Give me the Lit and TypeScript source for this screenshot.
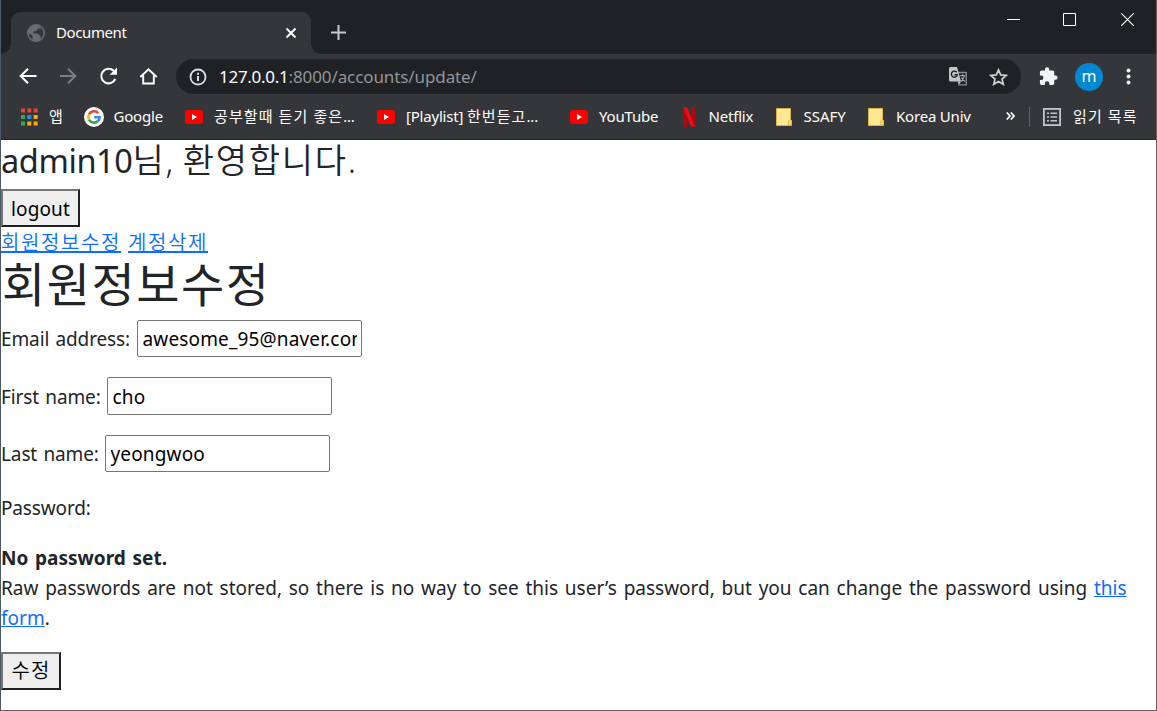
import { LitElement, html, css, svg } from "lit";
import { customElement } from "lit/decorators.js";

const youtube = svg`<svg width="18" height="14" viewBox="0 0 18 14"><rect width="18" height="14" rx="3" fill="#f00"/><path d="M7 4v6l5-3z" fill="#fff"/></svg>`;
const folder = svg`<svg width="16" height="18" viewBox="0 0 16 18"><path d="M.5.5h14v11l1 1v5H.5z" fill="#ffe794" stroke="#d9b44a"/><path d="M12.500 17v-4l1.500-1.500 1.500 1.500v4z" fill="#ffd75e" stroke="#d9b44a" stroke-width=".8"/></svg>`;
const netflix = svg`<svg width="12" height="20" viewBox="0 0 12 20"><path d="M0 0h4v19.500l-4 .5zM8 0h4v20l-4-.5z" fill="#b1060f"/><path d="M0 0h4l8 20-4-.5z" fill="#f00a16"/></svg>`;
const google = svg`<svg width="20" height="20" viewBox="0 0 20 20"><circle cx="10" cy="10" r="10" fill="#fff"/><g fill="none" stroke-width="2.600"><path d="M14.200 6.100A5.700 5.700 0 0 0 5 7.300" stroke="#ea4335"/><path d="M5 7.300a5.700 5.700 0 0 0 0 5.400" stroke="#fbbc05"/><path d="M5 12.700a5.700 5.700 0 0 0 8.800 1.500" stroke="#34a853"/><path d="M13.800 14.200A5.500 5.500 0 0 0 15.600 10.200H10.200" stroke="#4285f4"/></g></svg>`;
const appColors = ["#ea4335", "#ea4335", "#ea4335", "#34a853", "#2a8bf2", "#fbac05", "#34a853", "#fbac05", "#fbac05"];
const apps = svg`<svg width="17" height="18" viewBox="0 0 17 18">${appColors.map((c, i) => svg`<rect x=${(i % 3) * 6.3} y=${Math.floor(i / 3) * 6.5 + 0.5} width="4" height="4" fill=${c}/>`)}</svg>`;

const bookmarks = [
  { cls: "apps", icon: apps, label: "앱" },
  { cls: "google", icon: google, label: "Google" },
  { cls: "study", icon: youtube, label: html`<span class="ko">공부할때 듣기 좋은</span>...` },
  { cls: "playlist", icon: youtube, label: html`[Playlist] <span class="ko">한번듣고</span>...` },
  { cls: "youtube", icon: youtube, label: "YouTube" },
  { cls: "netflix", icon: netflix, label: "Netflix" },
  { cls: "ssafy", icon: folder, label: "SSAFY" },
  { cls: "korea", icon: folder, label: "Korea Univ" },
];

@customElement("app-root")
export class AppRoot extends LitElement {
  static styles = css`
    :host { display: block; width: 1157px; height: 711px; overflow: hidden; box-sizing: border-box; border: 1px solid #626262; border-left-color: #4b5a68; border-top: 0; background: #fff; color: #212529; font-family: "Noto Sans", "Noto Sans CJK KR", sans-serif; }
    * { box-sizing: border-box; }
    svg { display: block; flex: none; }
    .strip { height: 54px; background: #202124; display: flex; align-items: flex-end; color: #fff; }
    .tab { position: relative; margin-left: 10px; width: 300px; height: 42px; background: #35363a; border-radius: 9px 9px 0 0; display: flex; align-items: center; padding: 0 14px 0 16px; }
    .tab .t { font-size: 15px; margin-left: 11px; padding-bottom: 2px; flex: 1; letter-spacing: -0.4px; }
    .t { white-space: nowrap; }
    .foot { position: absolute; bottom: 0; width: 10px; height: 10px; }
    .foot.l { left: -10px; background: radial-gradient(circle at 0 0, #202124 9.5px, #35363a 10px); }
    .foot.r { right: -10px; background: radial-gradient(circle at 100% 0, #202124 9.5px, #35363a 10px); }
    .plus { margin: 0 0 14px 20px; }
    .win { margin-left: auto; display: flex; gap: 43px; margin-bottom: 28px; padding-right: 22px; }
    .win .x { margin-left: 2px; }
    .toolbar { height: 40px; background: #35363a; display: flex; align-items: flex-start; }
    .nav { display: flex; align-items: center; height: 44px; padding-left: 15px; gap: 16px; width: 175px; }
    .omni { margin-top: 5px; width: 845px; height: 35px; border-radius: 18px; background: #202124; display: flex; align-items: center; padding: 0 13px; }
    .url { flex: 1; font-size: 17px; color: #92959a; margin-left: 12px; letter-spacing: -0.1px; }
    .url b { font-weight: 400; color: #fff; letter-spacing: -0.28px; }
    .omni .tr { margin-right: 21px; }
    .right { display: flex; align-items: center; height: 45px; padding-left: 16px; }
    .avatar { width: 28px; height: 28px; border-radius: 50%; background: #0288d1; color: #fff; font: 16px/26px "Noto Sans", sans-serif; text-align: center; margin: 0 22px 0 15px; }
    .bookmarks { height: 46px; background: #35363a; border-bottom: 1px solid #242528; display: flex; align-items: center; color: #fff; font-size: 15px; }
    .bm { display: flex; align-items: center; flex: none; }
    .bm .t { margin-left: 11px; padding-bottom: 2px; letter-spacing: -0.2px; }
    .bm .t .ko { letter-spacing: 1.1px; }
    .bm.apps { margin-left: 20px; width: 63px; }
    .bm.google { width: 101px; } .bm.google .t { margin-left: 9.5px; }
    .bm.study { width: 192px; } .bm.playlist { width: 193px; } .bm.youtube { width: 113px; }
    .bm.netflix { width: 93px; } .bm.netflix .t { margin-left: 13.5px; }
    .bm.ssafy { width: 92px; } .bm.ssafy .t { margin-left: 11.5px; letter-spacing: 0; }
    .bm.korea .t { margin-left: 12px; }
    .bm.korea { width: 138px; }
    .more { margin-bottom: 2px; }
    .divider { width: 1px; height: 20px; background: #5f6164; margin: 0 13px 0 14px; }
    .reading { margin-left: 12px; padding-bottom: 2px; letter-spacing: 1.1px; }
    .page { font-size: 19px; line-height: 30px; }
    h3, h1 { margin: 0; font-weight: 400; white-space: nowrap; }
    h3 { font-size: 32.5px; line-height: 41px; height: 49px; letter-spacing: -0.4px; }
    .welcome { font-size: 34px; font-weight: 350; letter-spacing: 1.7px; word-spacing: -2.5px; }
    h1 { font-size: 47px; line-height: 54px; height: 63px; letter-spacing: 1.5px; padding-left: 1px; }
    button { display: block; border: 2px solid; border-color: #767676 #212121 #212121 #767676; background: #efefef; color: #000; font: inherit; padding: 0; height: 38px; border-radius: 0; }
    .logout { width: 79px; padding-top: 2px; letter-spacing: 0.1px; }
    .save { width: 60px; margin-top: 19px; font-size: 20px; font-weight: 350; letter-spacing: 1.2px; }
    a { color: #0d6efd; text-decoration: underline; }
    .links { height: 30px; white-space: nowrap; font-size: 20px; line-height: 31px; display: flex; gap: 7px; font-weight: 350; letter-spacing: 1.6px; }
    .field { display: flex; align-items: center; height: 37px; margin-bottom: 20px; }
    .field .t { flex: none; word-spacing: 1.5px; letter-spacing: -0.12px; }
    .field.email .t { width: 135.5px; } .field.first .t { width: 105.5px; } .field.last .t { width: 103.5px; }
    .field.first, .field.first input { height: 38px; }
    .field.first .t, .field.first input { padding-top: 2px; }
    .field.last { margin-bottom: 20.5px; }
    input { width: 225px; height: 37px; border: 1px solid #767676; border-radius: 2px; padding: 0 4px 0 5px; font: inherit; color: #000; background: #fff; outline: 0; letter-spacing: 0.15px; }
    .pw { height: 30px; margin-bottom: 20px; letter-spacing: -0.15px; }
    strong { font-weight: 700; }
    .raw { height: 90px; word-spacing: 1.81px; }
    .raw > div { height: 30px; white-space: nowrap; }
  `;

  render() {
    return html`
      <div class="strip">
        <div class="tab">
          <i class="foot l"></i><i class="foot r"></i>
          <svg width="18" height="18" viewBox="0 0 18 18"><circle cx="9" cy="9" r="8.200" fill="#35363a" stroke="#6a6c70" stroke-width="1.600"/><path d="M7 1.200C3 2 1 5.500 1 9l4.500 2.500L5.500 15l2 2.300c4 .5 6-1.300 6-3.300v-2l-3-2.500H6.500V7.500L9 7l2-2.500h2.500V3C11.500 1.300 9.500.8 7 1.200z" fill="#6a6c70"/></svg>
          <span class="t">Document</span>
          <svg width="12" height="12" viewBox="0 0 12 12"><path d="M1.500 1.500l9 9M10.500 1.500l-9 9" stroke="#fff" stroke-width="1.900"/></svg>
        </div>
        <svg class="plus" width="15" height="15" viewBox="0 0 15 15"><path d="M7.500 0v15M0 7.500h15" stroke="#c8c9cb" stroke-width="2"/></svg>
        <div class="win">
          <svg width="13" height="14" viewBox="0 0 13 14"><path d="M0 7.500h13" stroke="#fff"/></svg>
          <svg width="13" height="14" viewBox="0 0 13 14"><path d="M.5 1.500h12v12H.5z" fill="none" stroke="#fff"/></svg>
          <svg class="x" width="13" height="14" viewBox="0 0 13 14"><path d="M.3 1.300l12.400 12.400M12.700 1.300L.3 13.700" stroke="#fff" stroke-width="1.200"/></svg>
        </div>
      </div>
      <div class="toolbar">
        <div class="nav">
          <svg width="24" height="24" viewBox="0 0 24 24"><path d="M20.500 12H5.500M12 4.700L4.700 12l7.300 7.300" fill="none" stroke="#fff" stroke-width="2"/></svg>
          <svg width="24" height="24" viewBox="0 0 24 24"><path d="M4 12h14.500M12 4.700l7.300 7.300-7.300 7.300" fill="none" stroke="#7d7e81" stroke-width="2"/></svg>
          <svg width="24" height="24" viewBox="0 0 24 24"><path d="M19.300 15a7.300 7.300 0 1 1-1.600-8.200L19.500 8.600" fill="none" stroke="#fff" stroke-width="2"/><path d="M21 3.500v7.300h-7.300z" fill="#fff"/></svg>
          <svg width="24" height="24" viewBox="0 0 24 24"><path d="M4.300 13L12.500 5.200l8.200 7.800M7.200 11.200v8.300h10.600v-8.300" fill="none" stroke="#fff" stroke-width="1.900"/></svg>
        </div>
        <div class="omni">
          <svg width="18" height="18" viewBox="0 0 18 18"><circle cx="9" cy="9" r="7.500" fill="none" stroke="#dadce0" stroke-width="1.800"/><path d="M9 8v5M9 4.800v1.900" stroke="#dadce0" stroke-width="2"/></svg>
          <span class="url"><b class="t">127.0.0.1</b><span class="t">:8000/accounts/update/</span></span>
          <svg class="tr" width="19" height="19" viewBox="0 0 19 19"><path d="M8 5.500h9.300v12.300h-8" fill="none" stroke="#8b8d90" stroke-width="1.300"/><path d="M1.500 0H8l4 14.500H1.500A1.500 1.500 0 0 1 0 13V1.500A1.500 1.500 0 0 1 1.500 0z" fill="#c4c5c7"/><path d="M8.500 14.500H12l-2 3.300z" fill="#c4c5c7"/><path d="M7.700 5.300A3 3 0 1 0 8.300 7.700H5.500" fill="none" stroke="#202124" stroke-width="1.400"/><path d="M10.800 8.700h5.700M13.700 7.200v1.500M15.200 9c-.5 2.500-1.700 4.500-3 5.500M12.500 10.500c.8 2 2 3.200 3.500 4" fill="none" stroke="#b0b1b3" stroke-width="1.100"/></svg>
          <svg width="19" height="18" viewBox="0 0 19 18"><path d="M9.500 1.900l2.200 5 5.500.5-4.200 3.600 1.300 5.300-4.800-2.900-4.800 2.900L6 11 1.800 7.400l5.500-.5z" fill="none" stroke="#d0d1d3" stroke-width="1.700"/></svg>
        </div>
        <div class="right">
          <svg width="23" height="23" viewBox="0 0 24 24"><g transform="translate(1.300 1.400) scale(.88)"><path d="M20.500 11H19V7c0-1.100-.9-2-2-2h-4V3.500a2.500 2.500 0 0 0-5 0V5H4c-1.100 0-2 .9-2 2v3.800h1.500a2.700 2.700 0 0 1 0 5.400H2V20c0 1.100.9 2 2 2h3.800v-1.500a2.700 2.700 0 0 1 5.400 0V22H17c1.100 0 2-.9 2-2v-4h1.500a2.500 2.500 0 0 0 0-5z" fill="#f1f3f4"/></g></svg>
          <div class="avatar">m</div>
          <svg width="6" height="18" viewBox="0 0 6 18"><g fill="#f1f3f4"><circle cx="3.500" cy="2.500" r="2"/><circle cx="3.500" cy="8.500" r="2"/><circle cx="3.500" cy="14.500" r="2"/></g></svg>
        </div>
      </div>
      <div class="bookmarks">
        ${bookmarks.map((b) => html`<div class="bm ${b.cls}">${b.icon}<span class="t">${b.label}</span></div>`)}
        <svg class="more" width="9" height="8" viewBox="0 0 9 8"><path d="M.8.5L4 4 .8 7.500M4.800.5L8 4 4.800 7.500" fill="none" stroke="#fff" stroke-width="1.700"/></svg>
        <i class="divider"></i>
        <svg width="18" height="18" viewBox="0 0 18 18"><rect x=".9" y=".9" width="16.200" height="16.200" fill="none" stroke="#c4c5c7" stroke-width="1.800"/><path d="M4 5.300h2M4 9h2M4 12.700h2M7.500 5.300H14M7.500 9H14M7.500 12.700H14" stroke="#c4c5c7" stroke-width="1.500"/></svg>
        <span class="t reading">읽기 목록</span>
      </div>
      <div class="page">
        <h3>admin10<span class="welcome">님, 환영합니다.</span></h3>
        <button class="logout">logout</button>
        <div class="links"><a>회원정보수정</a><a>계정삭제</a></div>
        <h1>회원정보수정</h1>
        <div class="field email"><label class="t">Email address:</label><input value="awesome_95@naver.com" /></div>
        <div class="field first"><label class="t">First name:</label><input value="cho" /></div>
        <div class="field last"><label class="t">Last name:</label><input value="yeongwoo" /></div>
        <div class="pw">Password:</div>
        <div class="raw">
          <div><strong>No password set.</strong></div>
          <div>Raw passwords are not stored, so there is no way to see this user’s password, but you can change the password using <a>this</a></div>
          <div><a>form</a>.</div>
        </div>
        <button class="save">수정</button>
      </div>
    `;
  }
}
